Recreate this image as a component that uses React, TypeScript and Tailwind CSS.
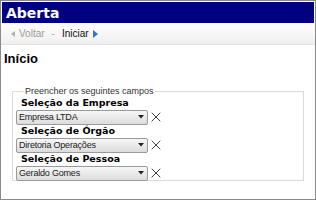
import { X } from 'lucide-react';

const fields = [
  { label: 'Seleção da Empresa', value: 'Empresa LTDA' },
  { label: 'Seleção de Órgão', value: 'Diretoria Operações' },
  { label: 'Seleção de Pessoa', value: 'Geraldo Gomes' },
];

function Combo({ value }: { value: string }) {
  return (
    <div className="flex items-center gap-0">
      <div className="flex h-[15px] w-[132px] items-center justify-between rounded-[2px] border border-[#9a9a9a] bg-gradient-to-b from-[#f7f7f7] to-[#dcdcdc] pl-[2px] pr-[3px]">
        <span className="text-[9px] leading-none tracking-[-0.2px] text-[#222]">{value}</span>
        <svg width="6" height="4" viewBox="0 0 6 4">
          <path d="M0 0h6L3 3.5z" fill="#222" />
        </svg>
      </div>
      <X size={16} strokeWidth={1.4} className="text-[#333]" />
    </div>
  );
}

export default function App() {
  return (
    <div className="h-[200px] w-[316px] overflow-hidden border border-[#8a8a8a] bg-white font-['Liberation_Sans',Arial,sans-serif]">
      <div className="mx-[1px] mt-[1px] flex h-[21px] items-center bg-[#000080] px-[4px]">
        <span className="font-['DejaVu_Sans',Verdana,sans-serif] text-[14px] font-bold leading-none text-white">Aberta</span>
      </div>
      <div className="flex h-[22px] items-center gap-[7px] border-b border-[#e4e4e4] bg-gradient-to-b from-white to-[#efefef] pl-[10px] text-[10px]">
        <span className="flex items-center gap-[4px] text-[#9a9a9a]">
          <svg width="4" height="6" viewBox="0 0 4 6">
            <path d="M4 0v6L0 3z" fill="#b0b0b0" />
          </svg>
          Voltar
        </span>
        <span className="text-[#aaa]">-</span>
        <span className="flex items-center gap-[4px] text-[#111]">
          Iniciar
          <svg width="5" height="8" viewBox="0 0 5 8">
            <path d="M0 0v8l5-4z" fill="#3a6fd0" />
          </svg>
        </span>
      </div>
      <div className="px-[3px] pt-[7px]">
        <div className="text-[13px] font-bold leading-none text-black">Início</div>
      </div>
      <fieldset className="mx-[11px] mt-[22px] h-[94px] border border-[#dcdcdc] px-[3px] pb-0">
        <legend className="ml-[8px] px-[1px] text-[9px] leading-none text-[#333]">Preencher os seguintes campos</legend>
        <div className="flex flex-col pt-[1px]">
          {fields.map((f) => (
            <div key={f.label} className="flex flex-col">
              <span className="pl-[5px] font-['DejaVu_Sans',Verdana,sans-serif] text-[9.5px] font-bold leading-[12px] text-black">{f.label}</span>
              <Combo value={f.value} />
            </div>
          ))}
        </div>
      </fieldset>
    </div>
  );
}
